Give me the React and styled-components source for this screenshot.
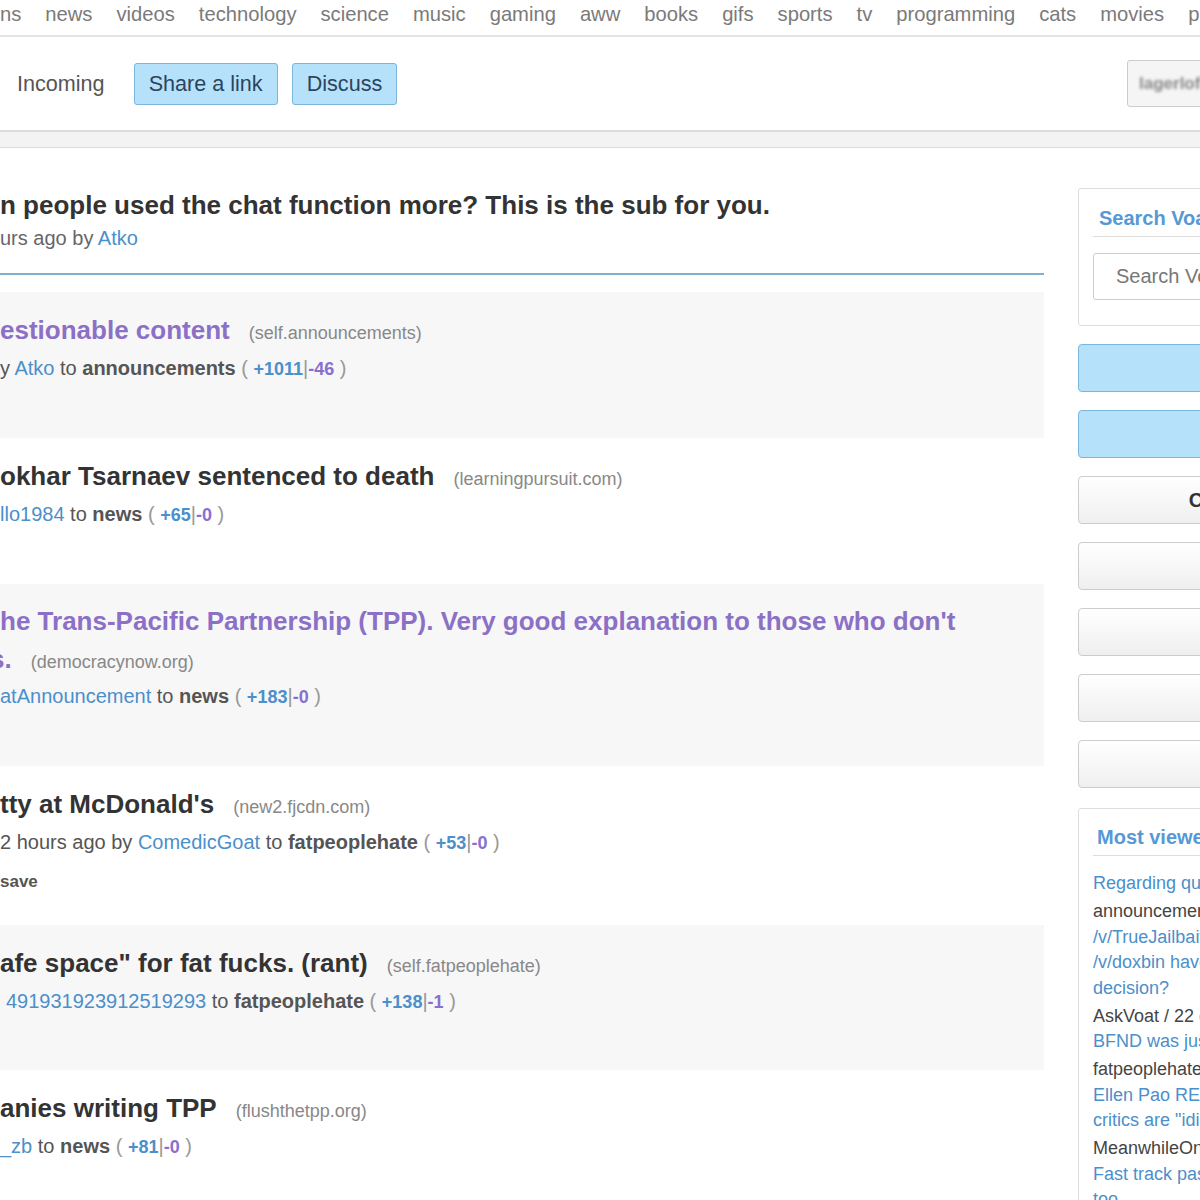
import React from 'react'
import styled, {createGlobalStyle} from "styled-components";

const GlobalStyle = createGlobalStyle`
  body {
    margin: 0;
    background: #fff;
    font-family: "Liberation Sans", Arial, sans-serif;
  }
`

const Page = styled.div`
  width: 1200px;
  height: 1200px;
  overflow: hidden;
  background: #fff;
`

const NavBar = styled.nav`
  display: flex;
  gap: 24px;
  height: 37px;
  box-sizing: border-box;
  padding-bottom: 6px;
  align-items: center;
  white-space: nowrap;
  font-size: 20.2px;
  color: #7a7a7a;
  border-bottom: 2px solid #e3e3e3;
`

const NavItem = styled.span`
  flex-shrink: 0;
`

const SubHeader = styled.div`
  display: flex;
  align-items: center;
  height: 93px;
  padding-left: 17px;
  white-space: nowrap;
`

const Tab = styled.span`
  font-size: 21.6px;
  color: #555;
  margin-right: 29px;
`

const HeadButton = styled.span`
  display: inline-flex;
  align-items: center;
  height: 42px;
  box-sizing: border-box;
  padding: 0 14px;
  margin-right: 14px;
  font-size: 21.6px;
  color: #2a4560;
  background: #b6e1fb;
  border: 1px solid #7bb6dc;
  border-radius: 3px;
`

const UserBox = styled.div`
  margin-left: auto;
  margin-right: -47px;
  width: 120px;
  height: 47px;
  box-sizing: border-box;
  display: flex;
  align-items: center;
  padding-left: 11px;
  background: #f5f5f5;
  border: 1px solid #ccc;
  border-radius: 3px;
  flex-shrink: 0;
`

const Blurred = styled.span`
  font-size: 17px;
  font-weight: bold;
  color: #888;
  filter: blur(1.4px);
`

const Band = styled.div`
  height: 18px;
  box-sizing: border-box;
  background: #f3f3f3;
  border-top: 2px solid #dcdcdc;
  border-bottom: 1px solid #dcdcdc;
`

const Body = styled.div`
  display: flex;
  gap: 34px;
`

const Main = styled.main`
  width: 1044px;
  flex-shrink: 0;
  padding-top: 37px;
  overflow: hidden;
`

const StickyTitle = styled.div`
  font-size: 26px;
  font-weight: bold;
  line-height: 40px;
  color: #333;
  white-space: nowrap;
`

const StickyMeta = styled.div`
  font-size: 20px;
  line-height: 26px;
  color: #666;
`

const Rule = styled.div`
  margin-top: 22px;
  height: 2px;
  background: #7fb0d0;
`

const Posts = styled.div`
  margin-top: 17px;
`

const Post = styled.div`
  height: ${props => props.h}px;
  box-sizing: border-box;
  padding-top: 18px;
  background: ${props => props.alt ? "#f7f7f7" : "#fff"};
  white-space: nowrap;
`

const Title = styled.div`
  font-size: 26px;
  line-height: ${props => props.lh || 40}px;
  margin-left: ${props => props.shift || 0}px;
`

const TitleText = styled.span`
  font-weight: bold;
  color: ${props => props.visited ? "#8b70c6" : "#333"};
`

const Domain = styled.span`
  margin-left: 19px;
  font-size: 18px;
  color: #888;
`

const Meta = styled.div`
  font-size: 20px;
  line-height: 30px;
  color: #555;
  padding-left: ${props => props.indent || 0}px;
`

const Author = styled.span`
  color: #4b8fcb;
`

const Sub = styled.span`
  font-weight: bold;
  color: #555;
`

const Paren = styled.span`
  color: #999;
`

const Up = styled.span`
  font-weight: bold;
  color: #4b8fcb;
  font-size: 18px;
`

const Down = styled.span`
  font-weight: bold;
  color: #8a6fd0;
  font-size: 18px;
`

const Actions = styled.div`
  margin-top: 10px;
  line-height: 28px;
  font-size: 17px;
  font-weight: bold;
  color: #555;
`

const Sidebar = styled.aside`
  width: 394px;
  flex-shrink: 0;
  padding-top: 40px;
  display: flex;
  flex-direction: column;
  gap: 18px;
`

const Box = styled.div`
  border: 1px solid #ddd;
  border-radius: 3px;
  padding: ${props => props.pad};
  margin-top: ${props => props.top || 0}px;
  background: #fff;
`

const BoxTitle = styled.div`
  font-size: 20px;
  font-weight: bold;
  line-height: 30px;
  color: #5599d6;
  padding: 0 0 3px ${props => props.indent || 4}px;
  border-bottom: 1px solid #ddd;
  white-space: nowrap;
`

const SearchInput = styled.input`
  display: block;
  margin-top: 16px;
  width: 100%;
  height: 47px;
  box-sizing: border-box;
  border: 1px solid #ccc;
  border-radius: 3px;
  padding-left: 22px;
  font-family: "Liberation Sans", Arial, sans-serif;
  font-size: 20px;
  color: #555;
  outline: none;
  &::placeholder { color: #777; }
`

const SideButton = styled.div`
  height: 48px;
  box-sizing: border-box;
  display: flex;
  align-items: center;
  justify-content: center;
  border-radius: 4px;
  font-size: 20px;
  font-weight: bold;
  white-space: nowrap;
  color: ${props => props.primary ? "#2a4560" : "#333"};
  background: ${props => props.primary ? "#b6e1fb" : "linear-gradient(#ffffff, #efefef)"};
  border: 1px solid ${props => props.primary ? "#7bb6dc" : "#ccc"};
`

const List = styled.div`
  margin-top: 15px;
  font-size: 18px;
  white-space: nowrap;
`

const ListLink = styled.div`
  color: #4b8fcb;
  line-height: 25.5px;
`

const ListSub = styled.div`
  color: #444;
  line-height: 25.5px;
  padding-top: 2.5px;
`

const navItems = ["ns", "news", "videos", "technology", "science", "music", "gaming", "aww", "books", "gifs", "sports", "tv", "programming", "cats", "movies", "pics"]

const posts = [
  {h: 146, alt: true, visited: true, title: ["estionable content"], domain: "(self.announcements)", lead: "y ", author: "Atko", sub: "announcements", up: 1011, down: 46},
  {h: 146, title: ["okhar Tsarnaev sentenced to death"], domain: "(learningpursuit.com)", lead: "", author: "llo1984", sub: "news", up: 65, down: 0},
  {h: 182, alt: true, visited: true, lh: 38, title: ["he Trans-Pacific Partnership (TPP). Very good explanation to those who don't", "s."], shift: -10, domain: "(democracynow.org)", lead: "", author: "atAnnouncement", sub: "news", up: 183, down: 0},
  {h: 159, title: ["tty at McDonald's"], domain: "(new2.fjcdn.com)", lead: "2 hours ago by ", author: "ComedicGoat", sub: "fatpeoplehate", up: 53, down: 0, save: true},
  {h: 145, alt: true, title: ["afe space\" for fat fucks. (rant)"], domain: "(self.fatpeoplehate)", lead: "", indent: 6, author: "491931923912519293", sub: "fatpeoplehate", up: 138, down: 1},
  {h: 160, title: ["anies writing TPP"], domain: "(flushthetpp.org)", lead: "", author: "_zb", sub: "news", up: 81, down: 0},
]

const mostViewed = [
  {lines: ["Regarding questionable content"], sub: "announcements / 1057 votes"},
  {lines: ["/v/TrueJailbait has been banned,", "/v/doxbin have been banned. Your", "decision?"], sub: "AskVoat / 22 comments"},
  {lines: ["BFND was just banned from reddit"], sub: "fatpeoplehate / 139 votes"},
  {lines: ["Ellen Pao RESPONDS: says her", "critics are \"idiots\""], sub: "MeanwhileOnReddit / 97 votes"},
  {lines: ["Fast track passes the Senate,", "too"], sub: "news / 80 votes"},
]

const PostItem = ({post}) => {
  const last = post.title.length - 1
  return (
    <Post h={post.h} alt={post.alt}>
      {post.title.map((line, i) => (
        <Title key={i} lh={post.lh} shift={i > 0 ? post.shift : 0}>
          <TitleText visited={post.visited}>{line}</TitleText>
          {i === last && <Domain>{post.domain}</Domain>}
        </Title>
      ))}
      <Meta indent={post.indent}>
        {post.lead}<Author>{post.author}</Author> to <Sub>{post.sub}</Sub> <Paren>(</Paren> <Up>+{post.up}</Up><Paren>|</Paren><Down>-{post.down}</Down> <Paren>)</Paren>
      </Meta>
      {post.save && <Actions>save</Actions>}
    </Post>
  )
}

const App = () => {
  return (
    <Page>
      <GlobalStyle />
      <NavBar>
        {navItems.map((item) => <NavItem key={item}>{item}</NavItem>)}
      </NavBar>
      <SubHeader>
        <Tab>Incoming</Tab>
        <HeadButton>Share a link</HeadButton>
        <HeadButton>Discuss</HeadButton>
        <UserBox><Blurred>lagerlof</Blurred></UserBox>
      </SubHeader>
      <Band />
      <Body>
        <Main>
          <StickyTitle>n people used the chat function more? This is the sub for you.</StickyTitle>
          <StickyMeta>urs ago by <Author>Atko</Author></StickyMeta>
          <Rule />
          <Posts>
            {posts.map((post, i) => <PostItem key={i} post={post} />)}
          </Posts>
        </Main>
        <Sidebar>
          <Box pad="14px 0 25px 14px">
            <BoxTitle indent={6}>Search Voat</BoxTitle>
            <SearchInput placeholder="Search Voat" />
          </Box>
          <SideButton primary>Share</SideButton>
          <SideButton primary>Discuss</SideButton>
          <SideButton>Create a subverse</SideButton>
          <SideButton>Subverses</SideButton>
          <SideButton>Sets</SideButton>
          <SideButton>Search</SideButton>
          <SideButton>Help</SideButton>
          <Box pad="13px 0 20px 14px" top={2}>
            <BoxTitle>Most viewed today</BoxTitle>
            <List>
              {mostViewed.map((item, i) => (
                <div key={i}>
                  <ListLink>
                    {item.lines.map((line, j) => <div key={j}>{line}</div>)}
                  </ListLink>
                  <ListSub>{item.sub}</ListSub>
                </div>
              ))}
            </List>
          </Box>
        </Sidebar>
      </Body>
    </Page>
  )
}

export default App;
